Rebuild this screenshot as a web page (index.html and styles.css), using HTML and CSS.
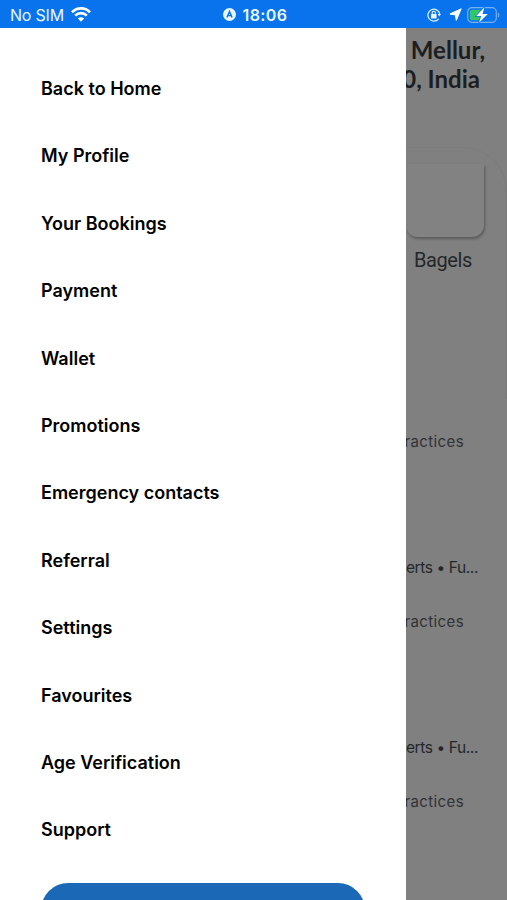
FILE: index.html
```html
<!DOCTYPE html>
<html lang="en">
<head>
  <meta charset="UTF-8" />
  <meta name="viewport" content="width=device-width, initial-scale=1.0"/>
  <title>Menu</title>
  <link rel="stylesheet" href="styles.css">
</head>
<body>

  <header class="status-bar">
    <div class="status-left">
      <span class="carrier">No SIM</span>
      <svg class="wifi" width="20" height="15" viewBox="0 0 20 15">
        <g fill="none" stroke="#fff" stroke-width="2.7">
          <path d="M1 5.2C6 .1 14 .1 19 5.2"/>
          <path d="M4.2 8.6c3.2-3.2 8.4-3.2 11.6 0"/>
        </g>
        <path d="M10 14.7l-3.2-3.3c1.8-1.7 4.6-1.7 6.4 0z" fill="#fff"/>
      </svg>
    </div>
    <div class="status-center">
      <svg width="13" height="13" viewBox="0 0 13 13">
        <circle cx="6.5" cy="6.5" r="6.5" fill="#e8f8ff"/>
        <path d="M4 9.4L6.5 3.6 9 9.4M5 7.6h3" fill="none" stroke="#0873ed" stroke-width="1.4"/>
      </svg>
      <span class="time">18:06</span>
    </div>
    <div class="status-right">
      <svg width="14" height="14" viewBox="0 0 14 14">
        <path d="M11.7 10.8A6 6 0 1 1 12.8 6" fill="none" stroke="#d8f2ff" stroke-width="1.3"/>
        <path d="M10.6 6h3.4l-1.7 2.6z" fill="#d8f2ff"/>
        <rect x="4" y="6" width="5.6" height="4.4" rx=".7" fill="#e8f8ff"/>
        <path d="M5.2 6V4.8a1.6 1.6 0 0 1 3.2 0V6" fill="none" stroke="#e8f8ff" stroke-width="1.1"/>
      </svg>
      <svg class="location" width="13" height="13" viewBox="0 0 13 13">
        <path d="M12.2.8L7.3 12.4 6.4 6.9.9 6z" fill="#fff" stroke="#fff" stroke-width="1" stroke-linejoin="round"/>
      </svg>
      <svg class="battery" width="33" height="18" viewBox="0 0 33 18">
        <rect x=".7" y="1.7" width="28.6" height="14.6" rx="4.3" fill="none" stroke="#73b3f5" stroke-width="1.2"/>
        <path d="M31 6.4c1.7.7 1.7 4.5 0 5.2z" fill="#73b3f5"/>
        <rect x="2.8" y="3.8" width="12" height="10.4" rx="2.5" fill="#35c46a"/>
        <path d="M17.4 1.2L9.2 10h5L12 16.8 20.8 8h-5.2z" fill="#fff" stroke="#0873ed" stroke-width="1.4" paint-order="stroke"/>
      </svg>
    </div>
  </header>

  <main class="screen">
    <aside class="drawer">
      <nav class="menu">
        <a>Back to Home</a>
        <a>My Profile</a>
        <a>Your Bookings</a>
        <a>Payment</a>
        <a>Wallet</a>
        <a>Promotions</a>
        <a>Emergency contacts</a>
        <a>Referral</a>
        <a>Settings</a>
        <a>Favourites</a>
        <a>Age Verification</a>
        <a>Support</a>
      </nav>
      <button class="drawer-button" aria-label="Log out"></button>
    </aside>

    <section class="page">
      <h2 class="address"><span>Mellur,</span><span class="line-two">0, India</span></h2>
      <div class="categories">
        <div class="category-card"></div>
        <p class="category-name">Bagels</p>
      </div>
      <div class="listing first">
        <p class="practices">ractices</p>
      </div>
      <div class="listing">
        <p class="cuisine">serts • Fu...</p>
        <p class="practices">ractices</p>
      </div>
      <div class="listing">
        <p class="cuisine">serts • Fu...</p>
        <p class="practices">ractices</p>
      </div>
    </section>
  </main>

</body>
</html>
```

FILE: styles.css
```css
:root {
  --status: #0873ed;
  --accent: #1b69b6;
  --dim: #808080;
}

* {
  box-sizing: border-box;
}

body {
  margin: 0;
  height: 100vh;
  display: flex;
  flex-direction: column;
  overflow: hidden;
  font-family: Inter, sans-serif;
  background: #fff;
}

.status-bar {
  height: 28px;
  flex: none;
  display: grid;
  grid-template-columns: 1fr auto 1fr;
  align-items: center;
  padding: 1px 7px 0 10px;
  background: var(--status);
  color: #e8f8ff;
}

.status-left,
.status-center,
.status-right {
  display: flex;
  align-items: center;
}

.carrier {
  font-size: 16px;
  letter-spacing: -0.2px;
}

.wifi {
  margin-left: 7px;
}

.status-center {
  gap: 7px;
}

.time {
  font-size: 16px;
  font-weight: 600;
  letter-spacing: 0.4px;
}

.status-right {
  justify-content: flex-end;
}

.location {
  margin: 0 5px 0 8px;
}

.screen {
  flex: 1;
  min-height: 0;
  display: flex;
}

.drawer {
  width: 406px;
  flex: none;
  padding: 27px 41px 0;
  overflow: hidden;
  background: #fff;
}

.menu {
  display: flex;
  flex-direction: column;
}

.menu a {
  height: 67.42px;
  line-height: 67.42px;
  font-size: 18px;
  font-weight: 600;
  color: #000;
}

.drawer-button {
  display: block;
  width: 324px;
  height: 54px;
  margin-top: 19px;
  border: none;
  border-radius: 27px;
  background: var(--accent);
}

.page {
  flex: 1;
  min-width: 0;
  display: flex;
  flex-direction: column;
  overflow: hidden;
  background: var(--dim);
  color: #24272a;
  white-space: nowrap;
}

.page p {
  margin: 0;
}

.address {
  height: 119px;
  flex: none;
  margin: 0;
  padding: 7px 22px 0 0;
  display: flex;
  flex-direction: column;
  align-items: flex-end;
  font-family: Lato, sans-serif;
  font-size: 24px;
  line-height: 29px;
  font-weight: 700;
  color: #1c1f22;
}

.line-two {
  margin-right: 5px;
}

.categories {
  height: 252px;
  flex: none;
  padding-top: 16px;
  border-top: 1px solid #7d7d7d;
  border-right: 1px solid #7a7a7a;
  border-top-right-radius: 44px;
}

.category-card {
  height: 73px;
  width: 78px;
  border-radius: 0 0 12px 12px;
  background: #828282;
  box-shadow: 1px 2px 3px rgba(0, 0, 0, 0.3);
}

.categories .category-name {
  margin: 9px 0 0 8px;
  font-family: Roboto, sans-serif;
  font-size: 20px;
  letter-spacing: -0.4px;
  line-height: 28px;
}

.listing {
  height: 180px;
  flex: none;
  display: flex;
  flex-direction: column;
  align-items: flex-end;
  font-size: 15px;
  line-height: 20px;
}

.listing.first {
  height: 159px;
  padding-top: 33px;
}

.listing .cuisine {
  margin-right: 29px;
  font-size: 15.5px;
  letter-spacing: -0.4px;
}

.listing .practices {
  margin-right: 43px;
  letter-spacing: 0.4px;
  color: #303235;
}

.listing .cuisine + .practices {
  margin-top: 34px;
}
```
